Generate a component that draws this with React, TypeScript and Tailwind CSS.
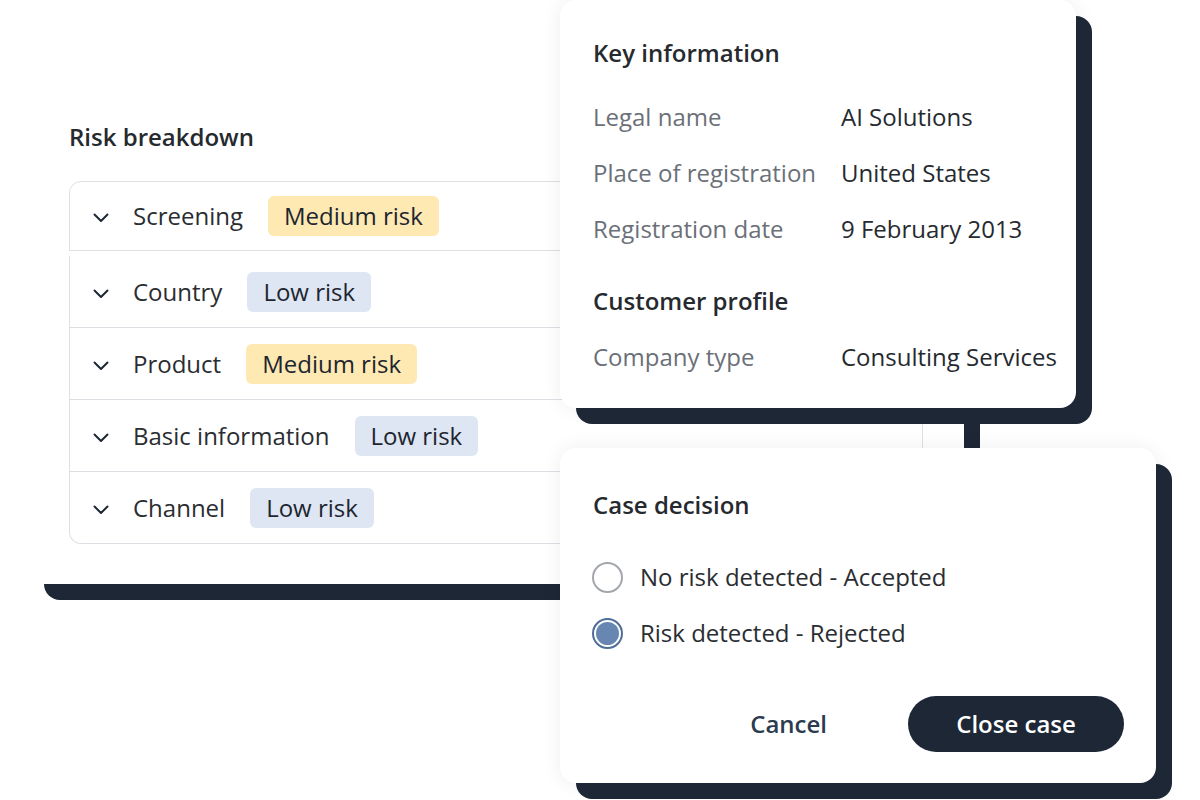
const risks = [
  { label: 'Screening', level: 'Medium risk' },
  { label: 'Country', level: 'Low risk' },
  { label: 'Product', level: 'Medium risk' },
  { label: 'Basic information', level: 'Low risk' },
  { label: 'Channel', level: 'Low risk' },
];

const keyInfo = [
  { label: 'Legal name', value: 'AI Solutions' },
  { label: 'Place of registration', value: 'United States' },
  { label: 'Registration date', value: '9 February 2013' },
];

function Chevron() {
  return (
    <svg width="16" height="10" viewBox="0 0 16 10" fill="none" className="mt-[4px] shrink-0">
      <polyline points="1.5,1.5 8,8 14.5,1.5" stroke="#1d2736" strokeWidth="2" strokeLinecap="round" strokeLinejoin="round" />
    </svg>
  );
}

function Badge({ level }: { level: string }) {
  const medium = level === 'Medium risk';
  return (
    <span
      className={
        medium
          ? 'rounded-md bg-[#fde9b1] px-4 h-[40px] flex items-center text-[24px] text-[#1d2530]'
          : 'rounded-md bg-[#dde6f2] px-4 h-[40px] flex items-center text-[24px] text-[#1d2530]'
      }
    >
      {level}
    </span>
  );
}

function RiskRow({ label, level }: { label: string; level: string }) {
  return (
    <div className="flex items-center pl-[23px] h-full">
      <Chevron />
      <span className="ml-[24px] text-[24px] text-[#2a2d31]">{label}</span>
      <span className="ml-[25px]">
        <Badge level={level} />
      </span>
    </div>
  );
}

export default function App() {
  const [first, ...rest] = risks;
  return (
    <div className="relative w-[1200px] h-[800px] overflow-hidden bg-white font-['Open_Sans',sans-serif]">
      {/* risk breakdown card */}
      <div className="ml-[28px] mt-[80px] w-[936px] h-[504px] rounded-2xl bg-white shadow-[16px_16px_0_0_#1d2736] px-[41px] pt-[41px]">
        <h2 className="text-[24px] leading-[32px] font-semibold text-[#262a2f]">Risk breakdown</h2>
        <div className="mt-[28px]">
          <div className="h-[70px] border border-[#dcdfe4] rounded-t-xl">
            <RiskRow {...first} />
          </div>
          <div className="mt-[5px] border-x border-b border-[#dcdfe4] rounded-b-xl">
            {rest.map((r, i) => (
              <div
                key={r.label}
                className={i < rest.length - 1 ? 'h-[72px] border-b border-[#dcdfe4]' : 'h-[71px]'}
              >
                <RiskRow {...r} />
              </div>
            ))}
          </div>
        </div>
      </div>

      {/* key information card */}
      <div className="absolute left-[560px] top-0 w-[516px] h-[408px] rounded-2xl bg-white shadow-[16px_16px_0_0_#1d2736,0_0_20px_rgba(0,0,0,0.07)] px-[33px] pt-[37px]">
        <h3 className="text-[24px] leading-[32px] font-semibold text-[#262a2f]">Key information</h3>
        <div className="mt-[20px]">
          {keyInfo.map((row) => (
            <div key={row.label} className="flex items-center h-[56px] text-[24px]">
              <span className="w-[248px] shrink-0 text-[#6b7078]">{row.label}</span>
              <span className="text-[#262a2f] whitespace-nowrap">{row.value}</span>
            </div>
          ))}
        </div>
        <h3 className="mt-[28px] text-[24px] leading-[32px] font-semibold text-[#262a2f]">Customer profile</h3>
        <div className="flex items-center h-[56px] mt-[12px] text-[24px]">
          <span className="w-[248px] shrink-0 text-[#6b7078]">Company type</span>
          <span className="text-[#262a2f] whitespace-nowrap">Consulting Services</span>
        </div>
      </div>

      {/* case decision card */}
      <div className="absolute left-[560px] top-[448px] w-[596px] h-[335px] rounded-2xl bg-white shadow-[16px_16px_0_0_#1d2736,0_0_20px_rgba(0,0,0,0.07)] px-[32px] pt-[41px]">
        <h3 className="pl-px text-[24px] leading-[32px] font-semibold text-[#262a2f]">Case decision</h3>
        <div className="mt-[28px]">
          <label className="flex items-center h-[56px] gap-[17px]">
            <span className="w-[31px] h-[31px] rounded-full border-2 border-[#a3a7ac] bg-white" />
            <span className="text-[24px] text-[#2a2d31]">No risk detected - Accepted</span>
          </label>
          <label className="flex items-center h-[56px] gap-[17px]">
            <span className="w-[31px] h-[31px] rounded-full border-2 border-[#4e6d99] bg-white p-[2px]">
              <span className="block w-full h-full rounded-full bg-[#6786b2]" />
            </span>
            <span className="text-[24px] text-[#2a2d31]">Risk detected - Rejected</span>
          </label>
        </div>
        <div className="mt-[35px] flex items-center justify-end">
          <button className="text-[24px] font-semibold text-[#2c3b4f] mr-[81px]">Cancel</button>
          <button className="w-[216px] h-[56px] rounded-full bg-[#1d2736] text-white text-[24px] font-semibold">
            Close case
          </button>
        </div>
      </div>
    </div>
  );
}
